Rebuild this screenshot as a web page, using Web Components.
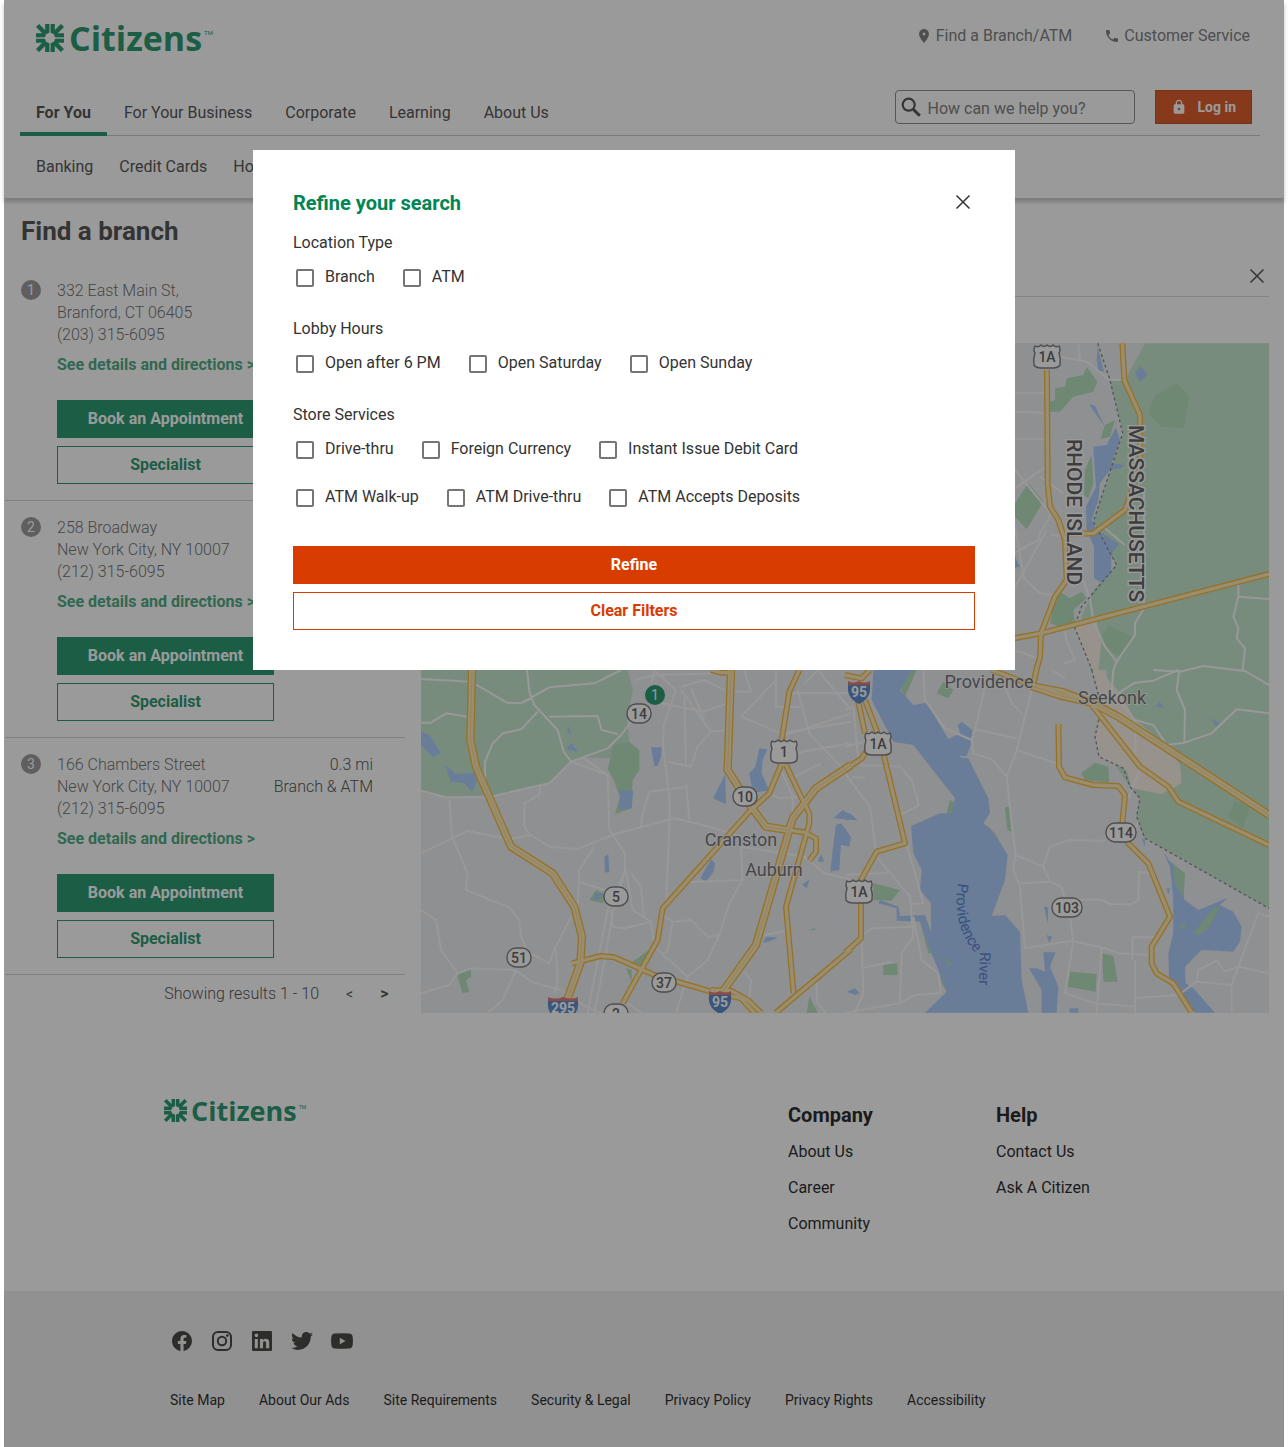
<!DOCTYPE html>
<html lang="en">
<head>
<meta charset="utf-8">
<title>Find a branch | Citizens</title>
<style>
  html { background: #fff; }
  body {
    margin: 0;
    font: 400 16px/20px Roboto, "Open Sans", sans-serif;
    color: #333;
    --green: #008555;
    --orange: #d93c00;
  }
</style>
</head>
<body>
<citizens-app></citizens-app>

<script>
const base = `
  *, *::before, *::after { box-sizing: border-box; }
  a { color: inherit; text-decoration: none; }
  button, input { font: inherit; margin: 0; }
  svg { display: block; }
  [hidden] { display: none; }
`;

function define(name, css, html, setup) {
  const template = document.createElement('template');
  template.innerHTML = `<style>${base}${css}</style>${html}`;
  customElements.define(name, class extends HTMLElement {
    constructor() {
      super();
      this.attachShadow({ mode: 'open' }).append(template.content.cloneNode(true));
    }
    connectedCallback() {
      if (setup && !this.ready) { this.ready = true; setup(this, this.shadowRoot); }
    }
  });
}

/* ---------- icons ---------- */
const icons = {
  pin: '<path d="M12 2C8.130 2 5 5.130 5 9c0 5.250 7 13 7 13s7-7.750 7-13c0-3.870-3.130-7-7-7zm0 9.500a2.500 2.500 0 1 1 0-5 2.500 2.500 0 0 1 0 5z" stroke="currentColor" stroke-width=".8"/>',
  phone: '<path d="M6.620 10.790c1.440 2.830 3.760 5.140 6.590 6.590l2.200-2.200c.27-.27.67-.36 1.020-.24 1.120.37 2.330.57 3.570.57.55 0 1 .45 1 1V20c0 .55-.45 1-1 1-9.390 0-17-7.610-17-17 0-.55.45-1 1-1h3.500c.55 0 1 .45 1 1 0 1.250.2 2.450.57 3.570.11.35.03.74-.25 1.020l-2.200 2.200z"/>',
  search: '<g fill="none" stroke="currentColor"><circle cx="9.700" cy="9.700" r="6" stroke-width="2.200"/><path d="M14 14l6.800 6.800" stroke-width="3"/></g>',
  lock: '<path d="M18 8h-1V6c0-2.760-2.240-5-5-5S7 3.240 7 6v2H6c-1.100 0-2 .9-2 2v10c0 1.100.9 2 2 2h12c1.100 0 2-.9 2-2V10c0-1.100-.9-2-2-2zm-6 9c-1.100 0-2-.9-2-2s.9-2 2-2 2 .9 2 2-.9 2-2 2zm3.100-9H8.900V6c0-1.710 1.390-3.100 3.100-3.100s3.100 1.390 3.100 3.100v2z"/>',
  close: '<path d="M5.500 5.500l13 13M18.500 5.500l-13 13" fill="none" stroke="currentColor" stroke-width="1.500"/>',
  facebook: '<path d="M12 2.040C6.500 2.040 2 6.530 2 12.060c0 5 3.660 9.150 8.440 9.900v-7H7.900v-2.900h2.540V9.850c0-2.510 1.490-3.890 3.780-3.890 1.090 0 2.230.19 2.230.19v2.470h-1.260c-1.240 0-1.630.77-1.630 1.560v1.880h2.780l-.45 2.900h-2.330v7A10 10 0 0 0 22 12.060C22 6.530 17.500 2.040 12 2.040z"/>',
  instagram: '<g fill="none" stroke="currentColor" stroke-width="2"><rect x="3" y="3" width="18" height="18" rx="5"/><circle cx="12" cy="12" r="4.200"/></g><circle cx="17.400" cy="6.600" r="1.400"/>',
  linkedin: '<path transform="translate(-1.330 -1.330) scale(1.111)" d="M20 3a1 1 0 0 1 1 1v16a1 1 0 0 1-1 1H4a1 1 0 0 1-1-1V4a1 1 0 0 1 1-1h16m-1.500 15.500v-5.300a3.260 3.260 0 0 0-3.260-3.260c-.85 0-1.840.52-2.320 1.300v-1.110h-2.790v8.370h2.790v-4.930c0-.77.62-1.400 1.390-1.400a1.400 1.400 0 0 1 1.400 1.400v4.930h2.790M6.880 8.560a1.680 1.680 0 1 0 0-3.370 1.690 1.690 0 0 0 0 3.370m1.390 9.940v-8.370H5.500v8.370h2.770z"/>',
  twitter: '<path transform="translate(-.6 -.1) scale(1.050)" d="M22.460 5c-.77.350-1.600.58-2.460.69.88-.53 1.560-1.370 1.880-2.380-.83.5-1.750.85-2.720 1.050C18.370 3.500 17.260 3 16 3c-2.350 0-4.270 1.920-4.270 4.290 0 .34.04.67.11.98C8.280 8.090 5.110 6.380 3 3.790c-.37.63-.58 1.370-.58 2.150 0 1.490.75 2.810 1.910 3.560-.71 0-1.370-.2-1.950-.5v.03c0 2.080 1.480 3.820 3.440 4.210a4.220 4.220 0 0 1-1.930.07 4.280 4.280 0 0 0 4 2.980 8.521 8.521 0 0 1-5.330 1.840c-.34 0-.68-.02-1.020-.06C3.440 19.290 5.700 20 8.120 20 16 20 20.330 13.460 20.330 7.790c0-.19 0-.37-.01-.56.84-.6 1.560-1.360 2.140-2.230z"/>',
  youtube: '<path fill-rule="evenodd" d="M5 4.500Q12 4 19 4.500q3.500.2 3.700 3.700.5 3.800 0 7.600-.2 3.500-3.700 3.700-7 .5-14 0-3.500-.2-3.700-3.700-.5-3.800 0-7.600Q1.500 4.700 5 4.500zM9.800 8.700v6.600l5.700-3.300z"/>'
};
define('ui-icon', `
  :host { display: block; flex: none; width: 24px; height: 24px; }
  svg { width: 100%; height: 100%; fill: currentColor; }
`, '<svg viewBox="0 0 24 24" aria-hidden="true"></svg>', (el, root) => {
  root.querySelector('svg').innerHTML = icons[el.getAttribute('name')] || '';
});

/* ---------- logo ---------- */
define('brand-logo', `
  :host { display: inline-flex; --mark: 28px; --word: 34px; --gap: 5px; --tm: 6px; --line: 30px; }
  :host([small]) { --mark: 23px; --word: 27px; --gap: 4px; --tm: 5px; --line: 23px; }
  a { display: flex; align-items: center; color: var(--green); }
  svg { width: var(--mark); height: var(--mark); }
  b { font: 700 var(--word)/var(--line) "Open Sans", sans-serif; margin-left: var(--gap); }
  small { font: 400 var(--tm)/8px Roboto, sans-serif; align-self: flex-start; padding-top: 9px; margin-left: 2px; }
  :host([small]) small { padding-top: 4px; }
`, `<a href="#" aria-label="Citizens home">
  <svg viewBox="0 0 28 28" aria-hidden="true">
    <g fill="none" stroke="currentColor" stroke-width="4.400" stroke-linejoin="round">
      <path d="M1.500 1.500L10 10M11.400 0V8.500L8.500 11.400H0"/>
      <path d="M26.500 1.500L18 10M16.600 0V8.500L19.500 11.400H28"/>
      <path d="M1.500 26.500L10 18M11.400 28V19.500L8.500 16.600H0"/>
      <path d="M26.500 26.500L18 18M16.600 28V19.500L19.500 16.600H28"/>
    </g>
    <path fill="#fff" d="M14 8.300Q16 10 18 10 18 12 19.700 14 18 16 18 18 16 18 14 19.700 12 18 10 18 10 16 8.300 14 10 12 10 10 12 10 14 8.300z"/>
    <path stroke="#fff" stroke-width=".7" d="M14 0V9M14 19V28M0 14H9M19 14H28"/>
  </svg><b>Citizens</b><small>TM</small></a>`);

/* ---------- buttons ---------- */
define('ui-button', `
  :host { display: block; --tone: var(--green); }
  :host([tone="orange"]) { --tone: var(--orange); }
  button { display: block; width: 100%; height: 38px; padding: 0; border: 1px solid var(--tone); border-radius: 0;
    background: var(--tone); color: #fff; font-weight: 700; line-height: 20px; }
  :host([outline]) button { background: #fff; color: var(--tone); }
`, '<button type="button"><slot></slot></button>');

/* ---------- header ---------- */
define('site-header', `
  :host { display: block; position: relative; background: #fff; box-shadow: 0 4px 4px rgba(0,0,0,.25); }
  .top { display: flex; justify-content: space-between; align-items: flex-start; padding: 20px 34px 34px 32px; }
  brand-logo { height: 36px; }
  .util { display: flex; gap: 32px; color: #666; }
  .util a { display: flex; align-items: center; gap: 4px; line-height: 32px; }
  .util ui-icon { width: 16px; height: 16px; }
  .bar { display: flex; justify-content: space-between; align-items: flex-end; margin: 0 24px 0 16px; padding-right: 8px;
    border-bottom: 1px solid #c1c1c1; }
  nav { display: flex; }
  .tabs { gap: 1px; margin-bottom: -1px; }
  .tabs a { padding: 0 16px; line-height: 38px; border-bottom: 4px solid transparent; }
  .tabs a[aria-current] { font-weight: 700; border-color: var(--green); }
  .tools { display: flex; gap: 20px; padding-bottom: 11px; }
  .search { display: flex; align-items: center; gap: 4px; width: 240px; height: 34px; padding: 0 3px; border: 1px solid #777; border-radius: 4px; }
  .search input { flex: 1; min-width: 0; height: 32px; border: 0; padding: 2px 0 0; background: none; outline: 0; }
  .search input::placeholder { color: #666; opacity: 1; }
  .login { display: flex; align-items: center; gap: 10px; height: 34px; padding: 0 15px; border: 1px solid #b93300; background: var(--orange);
    color: #fff; font-size: 14px; font-weight: 700; }
  .login ui-icon { width: 16px; height: 16px; }
  .sub { gap: 26px; padding: 21px 32px; }
`, `
  <div class="top">
    <brand-logo></brand-logo>
    <div class="util">
      <a href="#"><ui-icon name="pin"></ui-icon>Find a Branch/ATM</a>
      <a href="#"><ui-icon name="phone"></ui-icon>Customer Service</a>
    </div>
  </div>
  <div class="bar">
    <nav class="tabs" aria-label="Main">
      <a href="#" aria-current="page">For You</a><a href="#">For Your Business</a><a href="#">Corporate</a><a href="#">Learning</a><a href="#">About Us</a>
    </nav>
    <div class="tools">
      <label class="search"><ui-icon name="search"></ui-icon><input type="search" placeholder="How can we help you?" aria-label="Search"></label>
      <button class="login" type="button"><ui-icon name="lock"></ui-icon>Log in</button>
    </div>
  </div>
  <nav class="sub" aria-label="Personal"><a href="#">Banking</a><a href="#">Credit Cards</a><a href="#">Home</a></nav>
`);

/* ---------- branch list ---------- */
define('branch-card', `
  :host { display: grid; grid-template-columns: 20px 1fr auto; column-gap: 16px; padding: 16px 32px 16px 16px; border-bottom: 1px solid #d0d0d0;
    line-height: 22px; color: #555; }
  .num { width: 20px; height: 20px; border-radius: 50%; background: #888; color: #fff; font-size: 14px; line-height: 20px; text-align: center; }
  .address { font-weight: 300; white-space: pre-line; }
  .meta { font-weight: 300; text-align: right; color: #333; }
  a { display: block; margin: 8px 0 24px; font-weight: 700; color: #2a9a6c; }
  .actions { display: grid; gap: 8px; width: 217px; }
  .wide { grid-column: 2 / -1; }
`, `
  <span class="num"></span>
  <div class="address"></div>
  <div class="meta"><slot name="distance"></slot><br><slot name="kind"></slot></div>
  <div class="wide">
    <a href="#">See details and directions &gt;</a>
    <div class="actions"><ui-button>Book an Appointment</ui-button><ui-button outline>Specialist</ui-button></div>
  </div>
`, (el, root) => {
  root.querySelector('.num').textContent = el.getAttribute('number');
  root.querySelector('.address').textContent = el.getAttribute('address').split('|').join('\n');
});

define('result-pager', `
  :host { display: flex; justify-content: flex-end; align-items: center; gap: 26px; padding: 8px 16px; line-height: 22px; font-weight: 300; }
  button { border: 0; padding: 0; background: none; width: 9px; font-size: 14px; font-weight: 400; line-height: 22px; color: #333; }
  button + button { font-size: 16px; font-weight: 700; }
`, `<span>Showing results 1 - 10</span><button type="button" aria-label="Previous page">&lt;</button><button type="button" aria-label="Next page">&gt;</button>`);

/* ---------- map ---------- */
/* Each tile is plotted at three units to the pixel from its own origin. */
const tiles = [
  { x: 0, y: 327,
    park: ['0,0 620,0 636,60 618,150 625,215 565,265 485,262 450,275 385,340 230,375 75,380 0,362'],
    wood: ['578,225 625,215 655,240 655,300 635,330 630,415 582,433 597,380 578,330 560,298', '505,690 525,660 550,672 545,700', '108,915 150,897 150,920 135,930 145,965 125,970', '630,880 690,835 665,885 630,890', '615,895 632,900 632,935', '1165,980 1190,1028 1157,1028', '1162,782 1185,772 1180,780'],
    water: ['0,185 25,195 60,250 35,262 0,225', '72,285 105,312 160,308 168,335 152,365 130,340 90,335', '437,180 445,168 452,200', '437,238 450,218 472,245', '690,232 722,232 720,260 710,288 700,288 695,262', '597,362 637,360 632,415 595,420', '1015,235 1040,238 1025,270 1022,310 1045,362 995,368 985,310 1003,290', '876,385 913,312 915,403', '550,560 562,552 565,605 552,608', '838,625 870,568 882,580 878,605 855,635', '1237,445 1265,420 1290,435 1290,450', '1245,465 1260,460 1290,500 1285,530 1260,525 1255,600 1228,605 1235,540', '1190,575 1200,552 1210,575', '1143,645 1165,628 1158,655', '1025,820 1035,800 1072,802 1050,812', '525,670 545,668 535,688 515,688'],
    minor: ['0,27 150,35 258,98 300,100 385,52 520,40 600,0', '318,0 325,65 340,105 410,180 428,245 450,275 560,315 565,480 612,550 612,605 560,720 500,1028', '612,605 575,730 555,850 520,1028', '0,158 30,158 75,130 150,142', '192,390 192,275 215,220 245,190 300,178 350,125', '300,100 330,85', '385,140 530,138 542,180 590,192', '0,362 75,382 200,382 360,345 385,340 450,275 560,235 600,195 635,150', '485,262 560,315', '85,390 93,500 140,610 135,660 265,712 295,750 300,800 320,845 385,880 400,840 450,740', '0,550 140,483 265,508 330,495 385,530 470,537 580,493 760,445 865,470 960,500', '358,345 355,375 310,400 310,470 325,490', '520,530 475,600 470,720', '475,637 560,662', '640,30 700,15 900,10', '690,40 700,0 765,60 730,160 725,220 745,380 745,480 735,700', '720,100 850,125 920,100', '780,50 850,30 910,60', '790,80 795,290', '740,275 810,290 830,230 870,185 920,180', '685,365 800,350', '795,340 805,450', '685,365 665,430 660,470', '780,60 870,185', '810,55 850,150', '960,140 1080,190 1290,155', '1080,200 1290,130', '1100,70 1290,70', '1065,0 1065,110 1140,110', '1130,60 1165,190 1260,290', '940,65 990,65 970,0', '960,140 1065,30', '1120,250 1290,220', '1120,320 1200,280', '1190,0 1290,120', '1150,40 1190,0', '1045,370 1075,385 1150,380', '1080,300 1115,380 1115,430', '795,637 965,630 960,530 1150,560 1210,610 1290,628', '965,630 925,700 895,795 860,800 810,750 755,755 722,735', '570,720 575,770 610,775 690,755 700,830 800,920 860,870 895,795', '755,755 740,845 725,850', '615,600 635,720 690,755', '630,610 660,650 668,740', '0,720 45,750 60,840 110,910 85,945 0,970', '110,910 150,895 285,900 330,935 420,960 495,1010 540,1028', '285,900 245,990 200,1028', '800,920 765,1028', '405,840 410,930 400,970', '1030,795 1095,782', '1185,930 1190,1000 1215,1028', '970,905 990,930 985,985', '620,1000 660,1028'],
    major: ['453,880 540,858 580,862 700,915 870,965 960,985 1000,1028', '870,0 900,8 930,8', '1135,0 1105,65 1082,210', '1080,285 1045,370 985,425 725,715 710,810 605,1000', '1095,285 1140,380 1165,430 1165,460 1095,710 1118,970', '1035,470 1150,487 1185,505 1185,545 1165,572', '1290,838 1065,1028', '870,960 930,962 980,990 1020,1028'],
    highway: ['153,0 148,210 165,290 270,530 395,610 460,710 483,800 478,880 440,985', '930,0 920,300 990,410 1035,470 1100,480', '1290,285 1185,355 1115,445 1005,825 905,965'] },
  { x: 424, y: 327,
    park: ['785,0 1272,0 1272,715 895,500 875,440 885,385 855,350 800,270'],
    sand: ['745,0 765,0 830,75 870,150 965,225 1005,285 1010,340 950,372 860,355 845,300 762,260 750,200 770,110'],
    wood: ['275,70 295,35 325,60 310,85', '708,310 750,278 790,290 793,338 720,330', '480,412 493,410 500,485 487,480', '303,435 315,390 335,400 320,442', '675,905 755,912 752,965 668,950', '772,850 805,858 818,935 775,935', '115,885 157,880 158,915 115,915', '85,640 165,660 140,692 85,690', '1170,395 1215,405 1195,475 1148,440', '415,460 440,500 455,495 430,470', '970,570 1020,610 1015,700 1000,700', '165,55 200,0 215,0 180,80', '225,755 260,850 250,850', '280,900 300,905 305,965 290,940'],
    water: ['85,0 200,0 165,60 205,105 245,98 330,240 345,262 370,265 430,385 435,430 415,460 455,500 488,555 480,630 440,738 480,735 525,785 530,930 550,1028 240,1028 305,965 280,900 255,840 225,755 155,752 155,715 100,700 105,690 160,710 165,738 240,735 258,785 258,700 225,660 230,600 205,550 198,468 285,430 320,430 330,385 205,225 145,215 80,90', '305,210 345,190 338,165 350,155 382,180 378,225 365,258 335,258', '595,847 632,847 615,890 640,950 635,1028 590,1028 590,960 552,895 575,895 600,905', '597,710 610,712 608,760', '605,795 622,800 612,818', '955,545 975,575 985,585 990,640 1020,690 1060,720 1148,683 1125,705 1165,725 1190,770 1185,815 1165,845 1070,840 1020,890 1022,940 1045,955 1110,1028 1050,1028 990,955 972,920 970,850 985,790 985,690 975,590', '930,110 945,95 958,115', '1100,145 1125,160 1110,170', '0,428 15,430 38,450 0,450', '0,470 12,525 0,525', '5,965 30,955 45,970 30,975', '672,1015 700,1015 700,1028 675,1028', '890,505 900,510 900,530', '965,655 975,655 970,675'],
    isle: ['1045,790 1105,715 1125,712 1090,775 1060,795', '1003,765 1025,762 1015,780', '290,855 320,885 312,888'],
    minor: ['235,0 240,90 300,175 380,210 385,250 440,268 485,320 500,460 512,550 505,600 525,650 540,835 680,812 780,835 820,850 920,855', '420,50 390,180 380,210', '390,178 515,205', '575,0 515,240 485,320', '515,240 635,280', '480,50 500,100 530,130', '512,555 595,590 615,530 670,510 780,512', '595,590 615,635 650,650 675,740 685,815 660,970 750,1000 870,1010', '525,640 615,635', '670,688 770,690 795,702 860,703 880,690 882,605 915,608', '770,835 755,1028', '870,870 870,1028', '870,985 1000,975 1055,935 1160,945 1180,890 1240,730 1272,740', '1055,935 1060,900 1115,872 1140,905 1180,890 1272,910', '862,870 862,802 940,802', '1160,945 1160,1028', '0,310 75,410 95,560 195,680 205,800 170,850 165,1000', '0,1028 165,1000 210,975 288,970 280,910 230,870 205,740', '45,285 165,290 200,330 222,405 180,428 160,430', '165,430 190,540 235,700 200,702', '0,615 130,608', '50,800 80,775 210,770', '50,805 55,970 30,1028', '50,895 140,875', '0,120 25,110 40,270', '0,230 60,215', '20,322 60,322', '820,70 870,38 925,32 1000,0', '1003,0 995,60 1020,120 1018,218 965,225 925,165 870,150 800,60 805,0', '1018,218 1100,190 1175,118 1272,130', '1195,0 1272,45', '870,150 872,270', '888,290 850,385', '620,0 660,25', '880,455 870,480'],
    major: ['440,0 560,45 650,62 740,95', '740,105 885,290 970,350 1000,395 1272,525', '640,162 642,290 660,322 745,345 820,348 840,375 832,460', '845,515 910,580 975,740 920,830 920,880 935,910 985,940 1040,1028', '575,0 565,40', '0,300 50,265 70,235', '115,250 180,520 95,545 45,635', '48,700 48,805 0,848', '40,95 60,190', '60,90 98,190', '0,15 50,25 75,0'],
    highway: ['560,48 650,78 740,98 820,140 1272,435'],
    border: ['740,0 770,110 750,200 762,260 835,295 855,350 885,385 875,440 900,505 1272,715'] },
  { x: 589, y: -3,
    park: ['405,10 777,10 777,990 240,990 240,900 215,830 250,750 320,675 250,545 340,280 300,125 345,120'],
    sand: ['193,860 260,845 275,900 265,990 246,990'],
    wood: ['120,185 135,180 135,145 165,140 170,115 220,105 230,80 262,125 250,155 190,170 150,215 120,215', '0,500 15,490 55,430 100,485 50,568 15,530', '285,255 315,240 300,290 272,297', '225,390 245,345 250,430 235,475 222,465', '415,220 435,165 500,130 537,170 522,265 455,260', '120,850 130,800 150,755 180,775 215,755 230,775 190,810 195,850 150,860', '270,900 295,855 365,890 340,950 315,945'],
    water: ['263,20 282,95 265,92 260,60', '375,100 393,78 412,105 390,125', '237,193 255,197 285,262', '250,320 290,315 318,262 330,300 305,370 345,375 330,385 300,390 270,430 265,480 245,540 260,570 328,612 305,640 303,700 275,728 252,715 252,620 230,570 228,500 258,440', '10,640 30,680 10,685'],
    minor: ['150,50 230,65 300,120 345,120', '205,10 210,60', '0,158 105,158', '0,215 105,218', '0,298 105,298', '0,370 165,575 240,775 250,845 285,920 320,965 310,990', '0,455 65,410 110,380', '120,585 175,590', '0,645 85,600 90,580 125,520', '110,570 0,770', '42,715 15,560', '42,715 90,760 130,765', '90,410 160,460', '285,565 345,615', '402,800 402,450', '402,805 375,850 375,885 320,965', '685,735 685,770 670,830 685,865 680,895 705,925 698,990', '685,770 777,777', '430,990 510,995 580,978 700,993', '165,875 170,905 195,960 160,970', '0,925 95,960'],
    major: ['111,90 113,430 120,500 145,540 165,600 170,720 135,770 93,880 90,950 75,1005', '180,583 250,580 345,510 390,385 390,225 343,120 337,10', '0,897 93,880 400,800 777,702'],
    border: ['263,10 300,120 338,280 250,545 320,675 215,800 193,860 246,990'] }
];
const layers = [
  ['park', 'polygon', 'fill="#bbe2c6"'],
  ['sand', 'polygon', 'fill="#fbefe2"'],
  ['wood', 'polygon', 'fill="#a6dab2"'],
  ['water', 'polygon', 'fill="#9fc5fb"'],
  ['isle', 'polygon', 'fill="#a6dab2"'],
  ['minor', 'polyline', 'fill="none" stroke="#fafafa" stroke-width="6" stroke-linejoin="round"'],
  ['border', 'polyline', 'fill="none" stroke="#70757a" stroke-width="4" stroke-dasharray="9 8"'],
  ['highway', 'polyline', 'fill="none" stroke="#f6ae1c" stroke-width="25" stroke-linejoin="round"'],
  ['major', 'polyline', 'fill="none" stroke="#f6ae1c" stroke-width="18" stroke-linejoin="round"'],
  ['highway', 'polyline', 'fill="none" stroke="#fde6a8" stroke-width="17" stroke-linejoin="round"'],
  ['major', 'polyline', 'fill="none" stroke="#fde6a8" stroke-width="10" stroke-linejoin="round"'],
  ['highway', 'polyline', 'fill="none" stroke="#f8c963" stroke-width="2" stroke-linejoin="round"']
];
const shields = [
  ['oval', '14', 218, 371], ['oval', '10', 324, 454], ['oval', '5', 195, 554], ['oval', '51', 98, 615], ['oval', '37', 243, 640], ['oval', '2', 195, 671],
  ['us', '1', 363, 409], ['us', '1A', 457, 401], ['us', '1A', 438, 549], ['oval', '114', 700, 490], ['oval', '103', 646, 565], ['us', '1A', 626, 14],
  ['inter', '295', 142, 665], ['inter', '95', 299, 659], ['inter', '95', 438, 349]
];
function shield([kind, label, x, y]) {
  const half = label.length > 2 ? 15 : 12;
  if (kind === 'inter') {
    const w = label.length > 2 ? 15 : 11;
    return `<g transform="translate(${x} ${y})"><path fill="#3a76c4" d="M${-w} -7Q${-w - 1} 2 ${-w + 4} 7 ${-w + 7} 10 0 12 ${w - 7} 10 ${w - 4} 7 ${w + 1} 2 ${w} -7z"/><path fill="#e0605a" d="M${-w} -11Q${-w / 2} -8 0 -11 ${w / 2} -8 ${w} -11V-7H${-w}z"/><text y="5" fill="#fff" font-size="14" font-weight="700">${label}</text></g>`;
  }
  const shape = kind === 'oval'
    ? `<rect x="${-half}" y="-10" width="${half * 2}" height="19" rx="9"/>`
    : '<path d="M-12 -11Q-9 -9 -6 -12 -3 -9 0 -12 3 -9 6 -12 9 -9 12 -11 14 -7 12 -4 14 2 13 8 11 11 6 11H-6Q-11 11 -13 8 -14 2 -12 -4 -14 -7 -12 -11z"/>';
  return `<g transform="translate(${x} ${y})"><g fill="#fff" stroke="#666" stroke-width="1.400">${shape}</g><text y="5" fill="#444" font-size="14" font-weight="500">${label}</text></g>`;
}
define('branch-map', `
  :host { display: block; height: 670px; background: #e9eaee; overflow: hidden; }
  svg { width: 100%; height: 100%; font-family: Roboto, sans-serif; text-anchor: middle; }
  .place { fill: #55585c; stroke: #fff; stroke-width: 2px; stroke-opacity: .6; paint-order: stroke; font-size: 18px; }
  .state { fill: #444; stroke: #fff; stroke-width: 3px; paint-order: stroke; font-size: 21px; font-weight: 500; text-anchor: start; }
  .river { fill: #3a6bc8; font-size: 15px; text-anchor: start; }
`, '<svg viewBox="0 0 848 670" preserveAspectRatio="xMidYMid slice" role="img" aria-label="Map of branches near Providence"></svg>', (el, root) => {
  let out = '';
  for (const [key, tag, attrs] of layers) {
    for (const t of tiles) {
      out += `<g transform="translate(${t.x} ${t.y}) scale(.33333)" ${attrs}>${(t[key] || []).map(p => `<${tag} points="${p}"/>`).join('')}</g>`;
    }
  }
  out += shields.map(shield).join('');
  out += `
    <text class="place" x="320" y="503">Cranston</text>
    <text class="place" x="353" y="533">Auburn</text>
    <text class="place" x="568" y="345">Providence</text>
    <text class="place" x="691" y="361">Seekonk</text>
    <text class="state" transform="translate(646 96) rotate(90)">RHODE ISLAND</text>
    <text class="state" transform="translate(708 82) rotate(90)">MASSACHUSETTS</text>
    <path id="flow" fill="none" d="M537 540Q530 583 556 612"/>
    <text class="river"><textPath href="#flow">Providence</textPath></text>
    <text class="river" transform="translate(559 609) rotate(92)">River</text>
    <circle cx="234" cy="352" r="10" fill="#008555"/>
    <text x="234" y="357" fill="#fff" font-size="14">1</text>`;
  root.querySelector('svg').innerHTML = out;
});

/* ---------- locator ---------- */
define('branch-locator', `
  :host { display: block; padding: 16px 15px 0 1px; }
  h1 { margin: 0 0 16px 16px; font-size: 26px; line-height: 34px; font-weight: 700; }
  .cols { display: grid; grid-template-columns: 400px minmax(0, 1fr); gap: 16px; }
  .filter { display: flex; justify-content: flex-end; height: 33px; margin-bottom: 46px; border-bottom: 1px solid #d0d0d0; }
  .filter button { width: 24px; height: 24px; border: 0; padding: 0; background: none; color: #333; }
`, `
  <h1>Find a branch</h1>
  <div class="cols">
    <section aria-label="Results">
      <branch-card number="1" address="332 East Main St,|Branford, CT 06405|(203) 315-6095"></branch-card>
      <branch-card number="2" address="258 Broadway|New York City, NY 10007|(212) 315-6095"></branch-card>
      <branch-card number="3" address="166 Chambers Street|New York City, NY 10007|(212) 315-6095"><span slot="distance">0.3 mi</span><span slot="kind">Branch &amp; ATM</span></branch-card>
      <result-pager></result-pager>
    </section>
    <section aria-label="Map">
      <div class="filter"><button type="button" aria-label="Clear search"><ui-icon name="close"></ui-icon></button></div>
      <branch-map></branch-map>
    </section>
  </div>
`);

/* ---------- footer ---------- */
define('site-footer', `
  :host { display: flex; flex-direction: column; flex: 1; color: #000; }
  .upper { display: flex; justify-content: space-between; align-items: flex-start; padding: 86px 80px 57px 160px; }
  brand-logo { height: 23px; }
  .links { display: grid; grid-template-columns: 208px 208px; padding-top: 3px; }
  h2 { margin: 0 0 14px; font-size: 20px; line-height: 26px; font-weight: 700; }
  ul { display: grid; gap: 16px; margin: 0; padding: 0; list-style: none; }
  .lower { flex: 1; padding: 38px 160px 36px 166px; background: #ededed; }
  .social { display: flex; gap: 16px; margin-bottom: 37px; color: #252422; }
  .legal { display: flex; flex-wrap: wrap; gap: 34px; font-size: 14px; line-height: 20px; }
`, `
  <div class="upper">
    <brand-logo small></brand-logo>
    <div class="links">
      <div><h2>Company</h2><ul><li><a href="#">About Us</a></li><li><a href="#">Career</a></li><li><a href="#">Community</a></li></ul></div>
      <div><h2>Help</h2><ul><li><a href="#">Contact Us</a></li><li><a href="#">Ask A Citizen</a></li></ul></div>
    </div>
  </div>
  <div class="lower">
    <div class="social">
      <a href="#" aria-label="Facebook"><ui-icon name="facebook"></ui-icon></a>
      <a href="#" aria-label="Instagram"><ui-icon name="instagram"></ui-icon></a>
      <a href="#" aria-label="LinkedIn"><ui-icon name="linkedin"></ui-icon></a>
      <a href="#" aria-label="Twitter"><ui-icon name="twitter"></ui-icon></a>
      <a href="#" aria-label="YouTube"><ui-icon name="youtube"></ui-icon></a>
    </div>
    <nav class="legal" aria-label="Legal"><a href="#">Site Map</a><a href="#">About Our Ads</a><a href="#">Site Requirements</a><a href="#">Security &amp; Legal</a><a href="#">Privacy Policy</a><a href="#">Privacy Rights</a><a href="#">Accessibility</a></nav>
  </div>
`);

/* ---------- dialog ---------- */
define('check-option', `
  :host { display: block; }
  label { display: flex; align-items: center; gap: 11px; padding: 0 0 2px 3px; line-height: 46px; }
  input { appearance: none; width: 18px; height: 18px; margin-top: 2px; border: 2px solid #757575; border-radius: 2px; background: #fff; }
  input:checked { background: var(--green); }
`, '<label><input type="checkbox"><span><slot></slot></span></label>');

define('option-group', `
  :host { display: block; margin-top: 17px; }
  fieldset { margin: 0; padding: 0; border: 0; min-width: 0; }
  legend { padding: 0 0 2px; line-height: 19px; }
  .row { display: flex; flex-wrap: wrap; column-gap: 25px; }
`, '<fieldset><legend></legend><div class="row"><slot></slot></div></fieldset>', (el, root) => {
  root.querySelector('legend').textContent = el.getAttribute('heading');
});

define('refine-dialog', `
  :host { display: block; width: 762px; padding: 40px; background: #fff; }
  header { display: flex; justify-content: space-between; }
  h2 { margin: 0; font-size: 20px; line-height: 26px; font-weight: 700; color: var(--green); }
  header button { width: 24px; height: 24px; border: 0; padding: 0; background: none; color: #333; }
  .actions { display: grid; gap: 8px; margin-top: 24px; }
  i { flex-basis: 100%; }
`, `
  <header><h2>Refine your search</h2><button type="button" aria-label="Close"><ui-icon name="close"></ui-icon></button></header>
  <option-group heading="Location Type"><check-option>Branch</check-option><check-option>ATM</check-option></option-group>
  <option-group heading="Lobby Hours"><check-option>Open after 6 PM</check-option><check-option>Open Saturday</check-option><check-option>Open Sunday</check-option></option-group>
  <option-group heading="Store Services"><check-option>Drive-thru</check-option><check-option>Foreign Currency</check-option><check-option>Instant Issue Debit Card</check-option><i></i><check-option>ATM Walk-up</check-option><check-option>ATM Drive-thru</check-option><check-option>ATM Accepts Deposits</check-option></option-group>
  <div class="actions"><ui-button tone="orange">Refine</ui-button><ui-button tone="orange" outline>Clear Filters</ui-button></div>
`);

define('citizens-app', `
  :host { display: flex; flex-direction: column; position: relative; min-height: 100vh; margin: 0 4px; }
  .shade { position: absolute; inset: 0; background: rgba(53,53,53,.5); }
  refine-dialog { position: absolute; top: 150px; left: 249px; }
`, `
  <site-header></site-header>
  <branch-locator></branch-locator>
  <site-footer></site-footer>
  <div class="shade"></div>
  <refine-dialog role="dialog" aria-modal="true" aria-label="Refine your search"></refine-dialog>
`);
</script>
</body>
</html>
